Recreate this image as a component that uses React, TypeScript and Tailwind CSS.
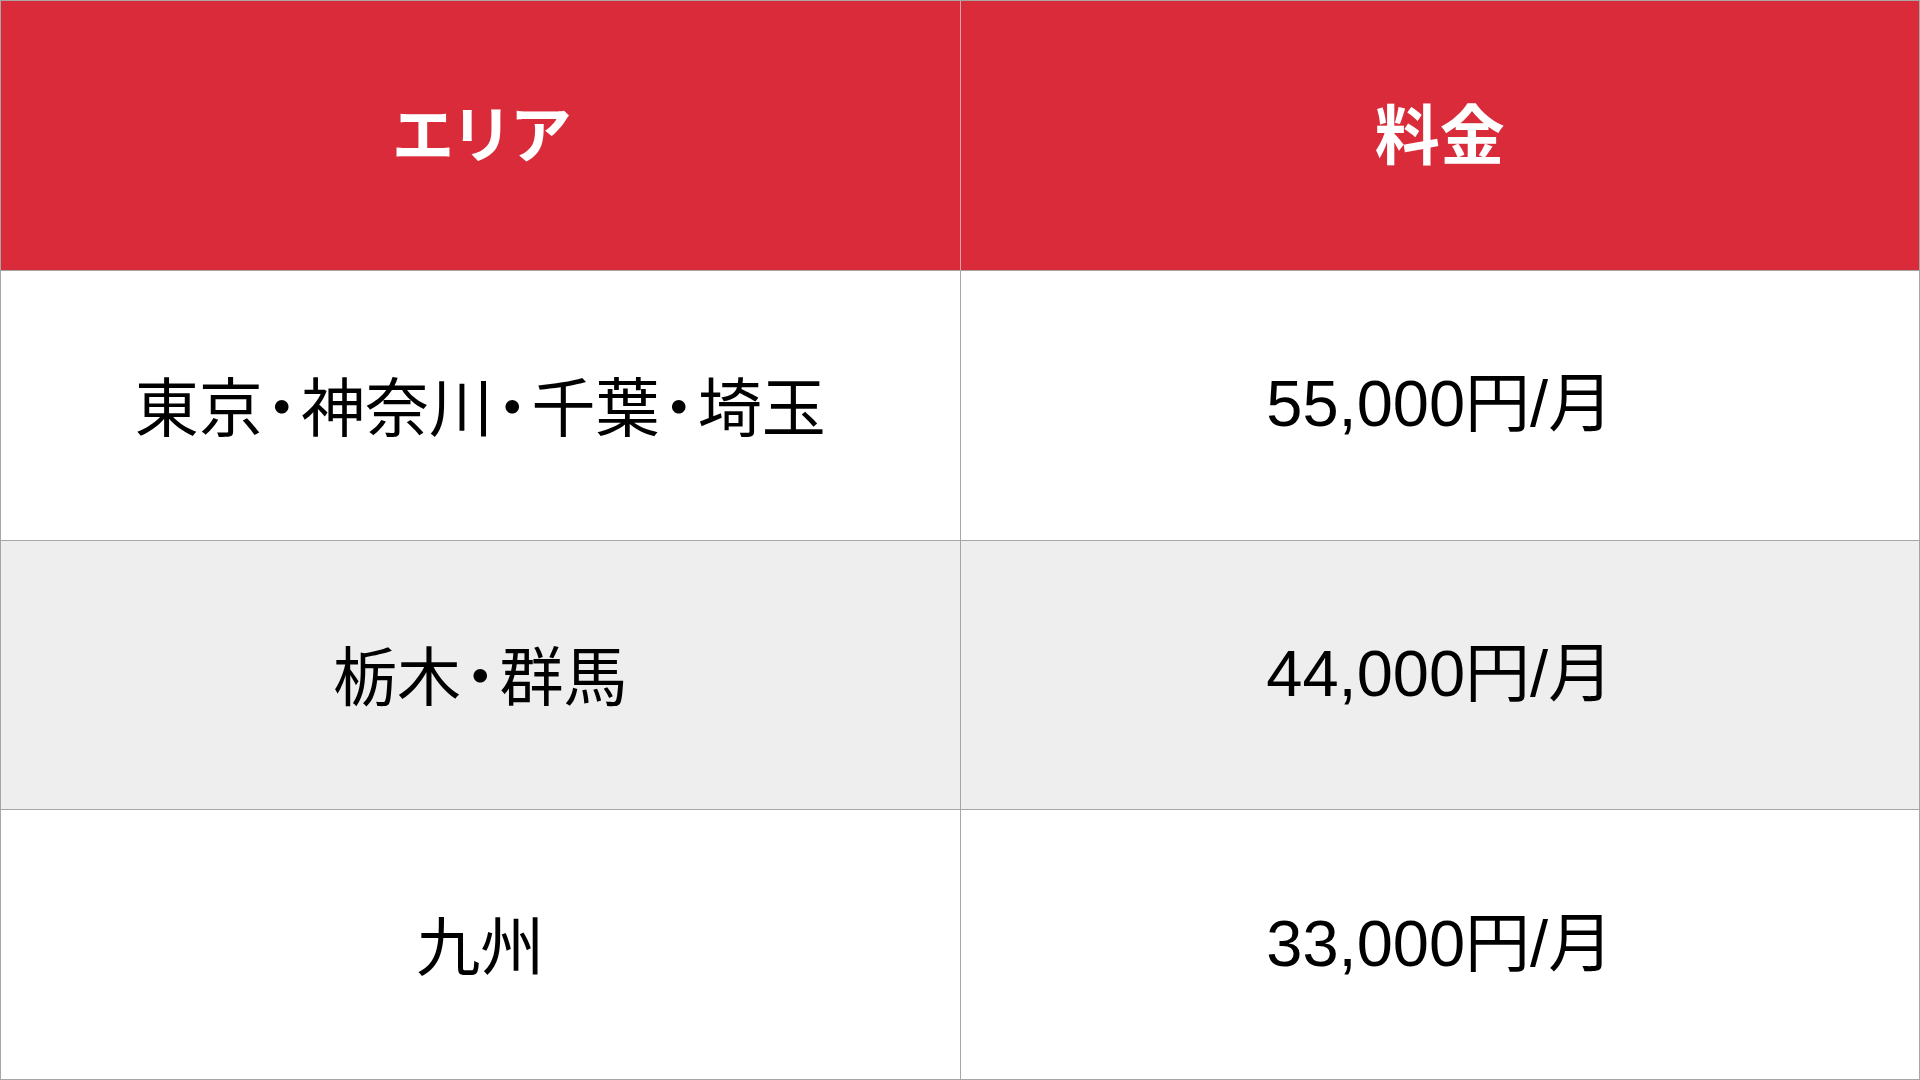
import React from "react";

const font = {
  fontFamily: '"Liberation Sans", Arial, "Noto Sans CJK JP", sans-serif',
};

function Dot() {
  return <span className="ml-[-0.2em] tracking-[-0.2em]">・</span>;
}

const rows: { area: React.ReactNode; price: string; bg: string }[] = [
  {
    area: (
      <>
        東京<Dot />神奈川<Dot />千葉<Dot />埼玉
      </>
    ),
    price: "55,000円/月",
    bg: "bg-white",
  },
  {
    area: (
      <>
        栃木<Dot />群馬
      </>
    ),
    price: "44,000円/月",
    bg: "bg-[#eeeeee]",
  },
  { area: <>九州</>, price: "33,000円/月", bg: "bg-white" },
];

export default function App() {
  return (
    <div className="w-[1920px] h-[1080px] overflow-hidden bg-white" style={font}>
      <div className="grid grid-cols-2 grid-rows-4 w-[1920px] h-[1080px] border-t border-l border-[#a6a6a6]">
        <div className="bg-[#d92b3a] flex items-center justify-center pb-[8px] border-r border-r-[#e8a3a9] border-b border-b-[#a6a6a6] text-white text-[62px] font-bold leading-none">
          <span className="font-['Noto_Sans_CJK_JP',sans-serif] font-bold tracking-[-0.05em]">エリア</span>
        </div>
        <div className="bg-[#d92b3a] flex items-center justify-center pb-[8px] border-r border-r-[#a6a6a6] border-b border-b-[#a6a6a6] text-white text-[65px] font-bold leading-none">
          <span className="font-['Noto_Sans_CJK_JP',sans-serif] font-bold">料金</span>
        </div>
        {rows.map((r, i) => (
          <React.Fragment key={i}>
            <div
              className={`${r.bg} flex items-center justify-center pb-[5px] border-r border-b border-[#a6a6a6] text-black text-[64px] leading-none`}
            >
              <span className="font-['Noto_Sans_CJK_JP',sans-serif]">{r.area}</span>
            </div>
            <div
              className={`${r.bg} flex items-center justify-center pb-[3px] border-r border-b border-[#a6a6a6] text-black text-[65px] leading-none`}
            >
              <span>{r.price}</span>
            </div>
          </React.Fragment>
        ))}
      </div>
    </div>
  );
}
